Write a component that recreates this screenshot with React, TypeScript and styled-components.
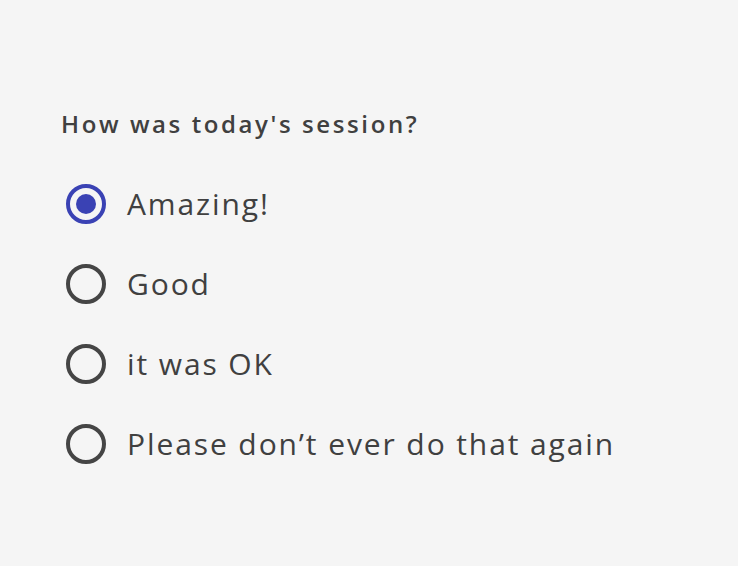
import React, { useState } from 'react'
import styled, { createGlobalStyle } from 'styled-components'

const GlobalStyle = createGlobalStyle`
  html, body {
    margin: 0;
    padding: 0;
    background: #f5f5f5;
  }
  body {
    font-family: "Open Sans", "Liberation Sans", sans-serif;
    color: #404040;
  }
`

const Page = styled.div`
  width: 738px;
  height: 566px;
  box-sizing: border-box;
  padding: 106px 0 0 61px;
`

const Question = styled.h2`
  margin: 0 0 42px;
  font-size: 24px;
  font-weight: 600;
  line-height: 36px;
  letter-spacing: 2.6px;
  color: #404040;
`

const Options = styled.div`
  display: flex;
  flex-direction: column;
  gap: 40px;
  padding-left: 5px;
`

const Option = styled.label`
  display: flex;
  align-items: center;
  gap: 21px;
  height: 40px;
  cursor: pointer;
`

const HiddenInput = styled.input`
  position: absolute;
  opacity: 0;
  width: 0;
  height: 0;
`

const Circle = styled.span<{ $checked: boolean }>`
  box-sizing: border-box;
  width: 40px;
  height: 40px;
  flex: none;
  border-radius: 50%;
  border: 4px solid ${p => (p.$checked ? '#3a42b4' : '#454545')};
  display: flex;
  align-items: center;
  justify-content: center;
  &::after {
    content: '';
    width: 20px;
    height: 20px;
    border-radius: 50%;
    background: #3a42b4;
    display: ${p => (p.$checked ? 'block' : 'none')};
  }
`

const Label = styled.span`
  font-size: 30px;
  font-weight: 400;
  line-height: 40px;
  letter-spacing: 1.9px;
  color: #404040;
`

const choices = ['Amazing!', 'Good', 'it was OK', 'Please don\u2019t ever do that again']

export default function App() {
  const [value, setValue] = useState(choices[0])
  return (
    <Page>
      <GlobalStyle />
      <Question>How was today's session?</Question>
      <Options>
        {choices.map(c => (
          <Option key={c}>
            <HiddenInput
              type="radio"
              name="session"
              checked={value === c}
              onChange={() => setValue(c)}
            />
            <Circle $checked={value === c} />
            <Label>{c}</Label>
          </Option>
        ))}
      </Options>
    </Page>
  )
}
